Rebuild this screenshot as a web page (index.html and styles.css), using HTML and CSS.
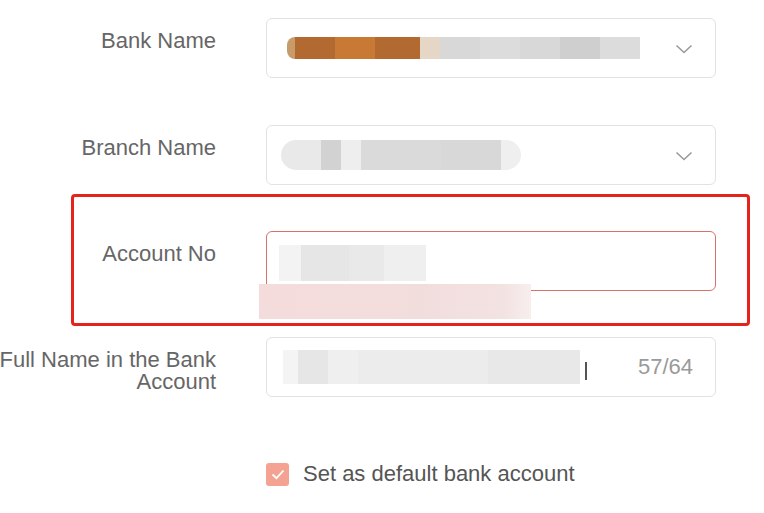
FILE: index.html
```html
<!DOCTYPE html>
<html lang="en">
<head>
<meta charset="utf-8">
<title>Bank account</title>
<link rel="stylesheet" href="styles.css">
</head>
<body>
<div class="form">
  <div class="row">
    <div class="label"><span>Bank Name</span></div>
    <div class="field select">
      <div class="value">
        <span class="blk o1" style="width:8px"></span><span class="blk o2" style="width:40px"></span><span class="blk o3" style="width:40px"></span><span class="blk o2" style="width:45px"></span><span class="blk t1" style="width:20px"></span><span class="blk g1" style="width:40px"></span><span class="blk g2" style="width:40px"></span><span class="blk g1" style="width:40px"></span><span class="blk g3" style="width:40px"></span><span class="blk g2" style="width:40px"></span>
      </div>
      <svg class="chev" width="18" height="10" viewBox="0 0 18 10"><polyline points="1.5,1.5 9,8.5 16.5,1.5" fill="none" stroke="#9a9a9a" stroke-width="1.6"/></svg>
    </div>
  </div>
  <div class="row">
    <div class="label"><span>Branch Name</span></div>
    <div class="field select">
      <div class="value pill">
        <span class="pb" style="width:40px;background:#e9e9e9"></span><span class="pb" style="width:20px;background:#d2d2d2"></span><span class="pb" style="width:20px;background:#eeeeee"></span><span class="pb" style="width:80px;background:#dadada"></span><span class="pb" style="width:60px;background:#d8d8d8"></span><span class="pb" style="width:20px;background:#efefef"></span>
      </div>
      <svg class="chev" width="18" height="10" viewBox="0 0 18 10"><polyline points="1.5,1.5 9,8.5 16.5,1.5" fill="none" stroke="#9a9a9a" stroke-width="1.6"/></svg>
    </div>
  </div>
  <div class="row highlighted">
    <div class="label"><span>Account No</span></div>
    <div class="field error">
      <div class="value acct">
        <span class="pb" style="width:22px;background:#f3f3f3"></span><span class="pb" style="width:48px;background:#e6e6e6"></span><span class="pb" style="width:35px;background:#e9e9e9"></span><span class="pb" style="width:42px;background:#efefef"></span>
      </div>
      <div class="err-blur"></div>
    </div>
    <div class="mark"></div>
  </div>
  <div class="row">
    <div class="label"><span>Full Name in the Bank<br>Account</span></div>
    <div class="field">
      <div class="value name">
        <span class="pb" style="width:15px;background:#f4f4f4"></span><span class="pb" style="width:30px;background:#e6e6e6"></span><span class="pb" style="width:30px;background:#efefef"></span><span class="pb" style="width:130px;background:#ececec"></span><span class="pb" style="width:92px;background:#e8e8e8"></span>
        <span class="caret"></span>
      </div>
      <span class="count">57/64</span>
    </div>
  </div>
  <label class="check-row">
    <span class="box"><svg width="14" height="11" viewBox="0 0 14 11"><polyline points="1.5,5.5 5.5,9.2 12.5,1.5" fill="none" stroke="#fff" stroke-width="1.8"/></svg></span>
    <span class="check-text">Set as default bank account</span>
  </label>
</div>
</body>
</html>
```
FILE: styles.css
```css
html, body {
  margin: 0;
  padding: 0;
  background: #ffffff;
}
body {
  font-family: "Liberation Sans", Arial, sans-serif;
  width: 764px;
  height: 513px;
  overflow: hidden;
}
.form {
  display: flex;
  flex-direction: column;
  padding-top: 18px;
}
.row {
  display: grid;
  grid-template-columns: 216px 450px;
  column-gap: 50px;
  margin-bottom: 46px;
  position: relative;
}
.row:first-child {
  margin-bottom: 47px;
}
.label {
  display: flex;
  justify-content: flex-end;
  align-items: flex-start;
  text-align: right;
  white-space: nowrap;
  font-size: 22px;
  line-height: 22px;
  color: #666666;
  padding-top: 12px;
}
.field {
  height: 60px;
  box-sizing: border-box;
  border: 1px solid #e2e2e2;
  border-radius: 6px;
  display: flex;
  align-items: center;
  padding: 0 22px 0 20px;
  position: relative;
  background: #fff;
}
.field.error {
  border-color: #d8706c;
}
.value {
  flex: 1;
  display: flex;
  align-items: center;
  height: 22px;
}
.blk {
  height: 22px;
  display: inline-block;
}
.o1 { background: #c99a6a; border-radius: 8px 0 0 8px; }
.o2 { background: #b26a30; }
.o3 { background: #c87a35; }
.t1 { background: #e5d6c6; }
.g1 { background: #d8d8d8; }
.g2 { background: #dcdcdc; }
.g3 { background: #cfcfcf; }
.pill {
  margin-left: -6px;
  height: 30px;
}
.pill .pb {
  height: 30px;
}
.pill .pb:first-child { border-radius: 15px 0 0 15px; }
.pill .pb:last-child { border-radius: 0 15px 15px 0; }
.pb {
  display: inline-block;
  height: 22px;
}
.acct {
  height: 36px;
  margin-left: -8px;
  margin-top: 4px;
}
.acct .pb { height: 36px; }
.chev {
  display: block;
  margin-top: 2px;
}
.err-blur {
  position: absolute;
  left: -8px;
  top: 52px;
  width: 272px;
  height: 35px;
  background: linear-gradient(90deg, #f5dcdc 0%, #f2dddd 60%, #f3e2e2 90%, #f8eeee 100%);
}
.mark {
  position: absolute;
  left: 71px;
  top: -37px;
  width: 679px;
  height: 132px;
  box-sizing: border-box;
  border: 3px solid #e3231c;
  border-radius: 4px;
  pointer-events: none;
}
.name {
  height: 34px;
  margin-left: -4px;
}
.name .pb { height: 34px; }
.caret {
  display: inline-block;
  width: 2px;
  height: 18px;
  background: #555;
  margin-left: 5px;
  margin-top: 8px;
}
.count {
  font-size: 22px;
  color: #9a9a9a;
  margin-left: 8px;
}
.check-row {
  display: flex;
  align-items: center;
  margin-left: 266px;
  margin-top: 18px;
  gap: 14px;
}
.box {
  width: 23px;
  height: 23px;
  border-radius: 3px;
  background: #f4a393;
  display: flex;
  align-items: center;
  justify-content: center;
}
.check-text {
  font-size: 22px;
  color: #555555;
}
```
